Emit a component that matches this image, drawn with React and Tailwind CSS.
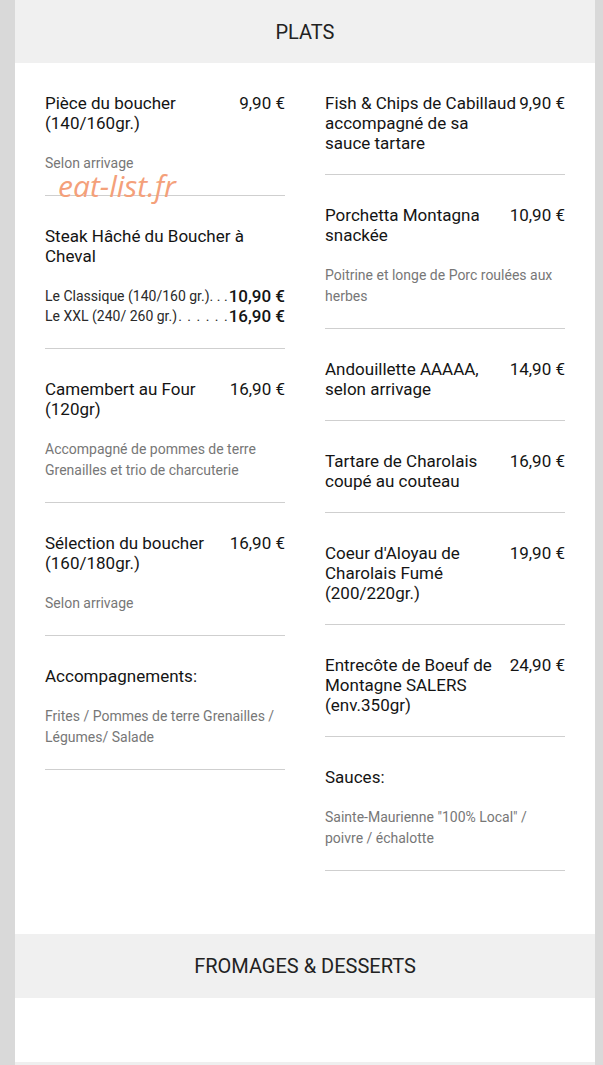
import React from "react";

const F = { fontFamily: "Roboto, 'Liberation Sans', sans-serif" };

function Item({ title, price, desc, lines }) {
  return (
    <div className="pt-[30px] pb-[21px] border-b border-[#cfcfcf]">
      <div className="flex items-start text-[17px] leading-5 font-normal text-[#141414]">
        <div className="flex-1 min-w-0">{title}</div>
        {price && <div className="shrink-0 whitespace-nowrap">{price}</div>}
      </div>
      {desc && (
        <div className="mt-5 text-[14px] leading-[21px] text-[#777]">{desc}</div>
      )}
      {lines && (
        <div className="mt-5">
          {lines.map((l, i) => (
            <div key={i} className="flex h-[20.5px] items-center">
              <span className="shrink-0 text-[14px] text-[#2a2a2a] whitespace-nowrap">{l[0]}</span>
              <span className="flex-1 min-w-0 overflow-hidden text-right text-[14px] text-[#2a2a2a] whitespace-nowrap tracking-[1px]">
                {l[1]}
              </span>
              <span className="shrink-0 text-[17px] font-medium text-[#141414] whitespace-nowrap">{l[2]}</span>
            </div>
          ))}
        </div>
      )}
    </div>
  );
}

export default function App() {
  return (
    <div className="min-h-[1065px] bg-[#d9d9d9] pl-[15px] pr-[8px] relative" style={F}>
      <div className="bg-white">
        <div className="h-[63px] bg-[#f0f0f0] flex items-center justify-center text-[20px] text-[#222]">
          PLATS
        </div>
        <div className="grid grid-cols-2 gap-x-10 px-[30px] pb-[63px]">
          <div>
            <Item title="Pièce du boucher (140/160gr.)" price="9,90 €" desc="Selon arrivage" />
            <Item
              title="Steak Hâché du Boucher à Cheval"
              lines={[
                ["Le Classique (140/160 gr.). . .", "", "10,90 €"],
                ["Le XXL (240/ 260 gr.) ", ". . . . . .", "16,90 €"],
              ]}
            />
            <Item
              title="Camembert au Four (120gr)"
              price="16,90 €"
              desc="Accompagné de pommes de terre Grenailles et trio de charcuterie"
            />
            <Item title="Sélection du boucher (160/180gr.)" price="16,90 €" desc="Selon arrivage" />
            <Item title="Accompagnements:" desc="Frites / Pommes de terre Grenailles / Légumes/ Salade" />
          </div>
          <div>
            <Item
              title={
                <>
                  <span className="whitespace-nowrap">Fish &amp; Chips de Cabillaud</span>
                  <br />
                  accompagné de sa
                  <br />
                  sauce tartare
                </>
              }
              price="9,90 €"
            />
            <Item
              title="Porchetta Montagna snackée"
              price="10,90 €"
              desc="Poitrine et longe de Porc roulées aux herbes"
            />
            <Item title="Andouillette AAAAA, selon arrivage" price="14,90 €" />
            <Item title="Tartare de Charolais coupé au couteau" price="16,90 €" />
            <Item title="Coeur d'Aloyau de Charolais Fumé (200/220gr.)" price="19,90 €" />
            <Item title="Entrecôte de Boeuf de Montagne SALERS (env.350gr)" price="24,90 €" />
            <Item title="Sauces:" desc={'Sainte-Maurienne "100% Local" / poivre / échalotte'} />
          </div>
        </div>
        <div className="h-16 bg-[#f0f0f0] flex items-center justify-center text-[20px] text-[#222]">
          FROMAGES &amp; DESSERTS
        </div>
        <div className="h-16 bg-white" />
        <div className="h-[3px] bg-[#efefef]" />
      </div>
      <div
        className="absolute left-[58px] top-[171px] text-[30px] leading-none italic text-[#f4a07a]"
        style={{ fontFamily: "'Open Sans', sans-serif" }}
      >
        eat-list.fr
      </div>
    </div>
  );
}
